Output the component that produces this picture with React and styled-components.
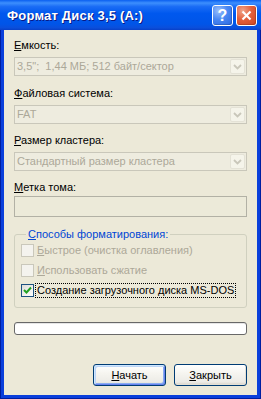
import React from "react";
import styled, { createGlobalStyle } from "styled-components";

const Global = createGlobalStyle`
  html, body { margin: 0; padding: 0; background: #ffffff; }
  * { box-sizing: border-box; }
`;

const Window = styled.div`
  width: 261px;
  height: 399px;
  display: flex;
  flex-direction: column;
  font-family: "Liberation Sans", Arial, sans-serif;
  font-size: 11px;
  background: #0831d9;
`;

const TitleBar = styled.div`
  height: 30px;
  flex: none;
  display: flex;
  align-items: center;
  padding: 0 4px 0 7px;
  background: linear-gradient(
    180deg,
    #0a5ff0 0%,
    #3d8ffd 10%,
    #1a6cf5 22%,
    #0058ee 45%,
    #0055e8 80%,
    #0a4fdc 92%,
    #0840c8 100%
  );
`;

const Title = styled.div`
  flex: 1;
  color: #ffffff;
  font-family: "Liberation Sans", Arial, sans-serif;
  font-weight: bold;
  font-size: 13px;
  letter-spacing: 0.2px;
  text-shadow: 1px 1px 0 #0a1883;
  padding-top: 1px;
  white-space: nowrap;
`;

const TitleButtons = styled.div`
  display: flex;
  gap: 3px;
  padding-top: 1px;
`;

const TitleButton = styled.div`
  width: 21px;
  height: 21px;
  border: 1px solid #ffffff;
  border-radius: 3px;
  display: flex;
  align-items: center;
  justify-content: center;
  color: #ffffff;
  font-weight: bold;
  font-size: 16px;
  font-family: "Liberation Sans", Arial, sans-serif;
  background: ${(p) =>
    p.$close
      ? "radial-gradient(circle at 30% 25%, #f0a48a 0%, #e3603c 45%, #cc4420 100%)"
      : "radial-gradient(circle at 30% 25%, #9cc0fc 0%, #4a88f3 45%, #2a66e0 100%)"};
  box-shadow: inset -1px -1px 0 rgba(0, 0, 0, 0.15);
`;

const Frame = styled.div`
  flex: 1;
  display: flex;
  padding: 0 4px 4px 4px;
  background: #0a3fdb;
  box-shadow: inset 1px 0 0 #001ea0, inset -1px 0 0 #001ea0, inset 0 -1px 0 #001ea0;
`;

const Body = styled.div`
  flex: 1;
  display: flex;
  flex-direction: column;
  background: #ece9d8;
  padding: 9px 10px 9px 10px;
`;

const Label = styled.div`
  line-height: 13px;
  height: 13px;
  color: #000000;
  margin-top: ${(p) => p.$mt || 0}px;
  margin-bottom: ${(p) => (p.$mb !== undefined ? p.$mb : 5)}px;
  white-space: nowrap;
`;

const Key = styled.span`
  text-decoration: underline;
  text-underline-offset: 1px;
`;

const Combo = styled.div`
  height: 19px;
  border: 1px solid #c9c7ba;
  background: #eeecdf;
  display: flex;
  align-items: center;
  padding: 0 1px 0 2px;
`;

const ComboText = styled.div`
  flex: 1;
  color: #aca899;
  white-space: pre;
  line-height: 13px;
`;

const DropButton = styled.div`
  width: 15px;
  height: 15px;
  border: 1px solid #e4e2d6;
  border-radius: 2px;
  background: #f5f4ea;
  display: flex;
  align-items: center;
  justify-content: center;
`;

const TextBox = styled.div`
  height: 21px;
  border: 1px solid #b2b1a5;
  background: #ecead9;
`;

const Group = styled.fieldset`
  margin: 11px 0 0 0;
  padding: 3px 6px 10px 6px;
  border: 1px solid #d0d0bf;
  border-radius: 3px;
  display: flex;
  flex-direction: column;
  gap: 7px;
  min-width: 0;
`;

const Legend = styled.legend`
  color: #0046d5;
  padding: 0 2px;
  margin-left: 5px;
  line-height: 13px;
`;

const CheckRow = styled.div`
  display: flex;
  align-items: center;
  height: 13px;
  color: ${(p) => (p.$disabled ? "#aca899" : "#000000")};
`;

const Box = styled.div`
  width: 13px;
  height: 13px;
  flex: none;
  margin-right: 2px;
  border: 1px solid ${(p) => (p.$disabled ? "#cac8bb" : "#1c5180")};
  background: ${(p) =>
    p.$disabled ? "#f4f3ee" : "linear-gradient(135deg, #dcdcd7 0%, #ffffff 100%)"};
  display: flex;
  align-items: center;
  justify-content: center;
`;

const CheckText = styled.span`
  line-height: 13px;
  white-space: nowrap;
  padding: 0 1px;
  outline: ${(p) => (p.$focus ? "1px dotted #000000" : "none")};
`;

const Progress = styled.div`
  margin-top: 14px;
  height: 13px;
  border: 1px solid #686868;
  border-radius: 3px;
  background: #ffffff;
  box-shadow: inset 0 1px 0 #e6e6e6;
`;

const Buttons = styled.div`
  margin-top: auto;
  display: flex;
  justify-content: flex-end;
  gap: 8px;
`;

const Button = styled.div`
  width: 73px;
  height: 22px;
  border: 1px solid #003c74;
  border-radius: 3px;
  display: flex;
  align-items: center;
  justify-content: center;
  color: #000000;
  line-height: 13px;
  background: linear-gradient(180deg, #ffffff 0%, #f6f5f0 40%, #ecebe6 85%, #d6d0c5 100%);
  box-shadow: ${(p) =>
    p.$default
      ? "inset 1px 1px 0 #cee7ff, inset -1px -1px 0 #6982ee, inset 2px 2px 0 #bcd4f6, inset -2px -2px 0 #89adf0"
      : "inset -1px -1px 0 #e3e0d5"};
`;

const Chevron = ({ color }) => (
  <svg width="9" height="6" viewBox="0 0 9 6">
    <polyline points="1,1 4.5,4.5 8,1" fill="none" stroke={color} strokeWidth="1.8" />
  </svg>
);

const Check = () => (
  <svg width="9" height="9" viewBox="0 0 9 9">
    <polyline points="1,4 3.5,6.5 8,1.5" fill="none" stroke="#21a121" strokeWidth="2" />
  </svg>
);

const CloseGlyph = () => (
  <svg width="11" height="11" viewBox="0 0 11 11">
    <line x1="1.5" y1="1.5" x2="9.5" y2="9.5" stroke="#fff" strokeWidth="2.2" />
    <line x1="9.5" y1="1.5" x2="1.5" y2="9.5" stroke="#fff" strokeWidth="2.2" />
  </svg>
);

const DropCombo = ({ text }) => (
  <Combo>
    <ComboText>{text}</ComboText>
    <DropButton>
      <Chevron color="#c9c7ba" />
    </DropButton>
  </Combo>
);

export default function App() {
  return (
    <>
      <Global />
      <Window>
        <TitleBar>
          <Title>Формат Диск 3,5 (A:)</Title>
          <TitleButtons>
            <TitleButton>?</TitleButton>
            <TitleButton $close>
              <CloseGlyph />
            </TitleButton>
          </TitleButtons>
        </TitleBar>
        <Frame>
          <Body>
            <Label>
              <Key>Е</Key>мкость:
            </Label>
            <DropCombo text={'3,5";  1,44 МБ; 512 байт/сектор'} />
            <Label $mt={11}>
              <Key>Ф</Key>айловая система:
            </Label>
            <DropCombo text="FAT" />
            <Label $mt={10}>
              <Key>Р</Key>азмер кластера:
            </Label>
            <DropCombo text="Стандартный размер кластера" />
            <Label $mt={10} $mb={2}>
              <Key>М</Key>етка тома:
            </Label>
            <TextBox />
            <Group>
              <Legend>
                <Key>С</Key>пособы форматирования:
              </Legend>
              <CheckRow $disabled>
                <Box $disabled />
                <CheckText>
                  <Key>Б</Key>ыстрое (очистка оглавления)
                </CheckText>
              </CheckRow>
              <CheckRow $disabled>
                <Box $disabled />
                <CheckText>
                  <Key>И</Key>спользовать сжатие
                </CheckText>
              </CheckRow>
              <CheckRow>
                <Box>
                  <Check />
                </Box>
                <CheckText $focus>Создание загрузочного диска MS-DOS</CheckText>
              </CheckRow>
            </Group>
            <Progress />
            <Buttons>
              <Button $default>
                <span>
                  <Key>Н</Key>ачать
                </span>
              </Button>
              <Button>
                <span>
                  <Key>З</Key>акрыть
                </span>
              </Button>
            </Buttons>
          </Body>
        </Frame>
      </Window>
    </>
  );
}
